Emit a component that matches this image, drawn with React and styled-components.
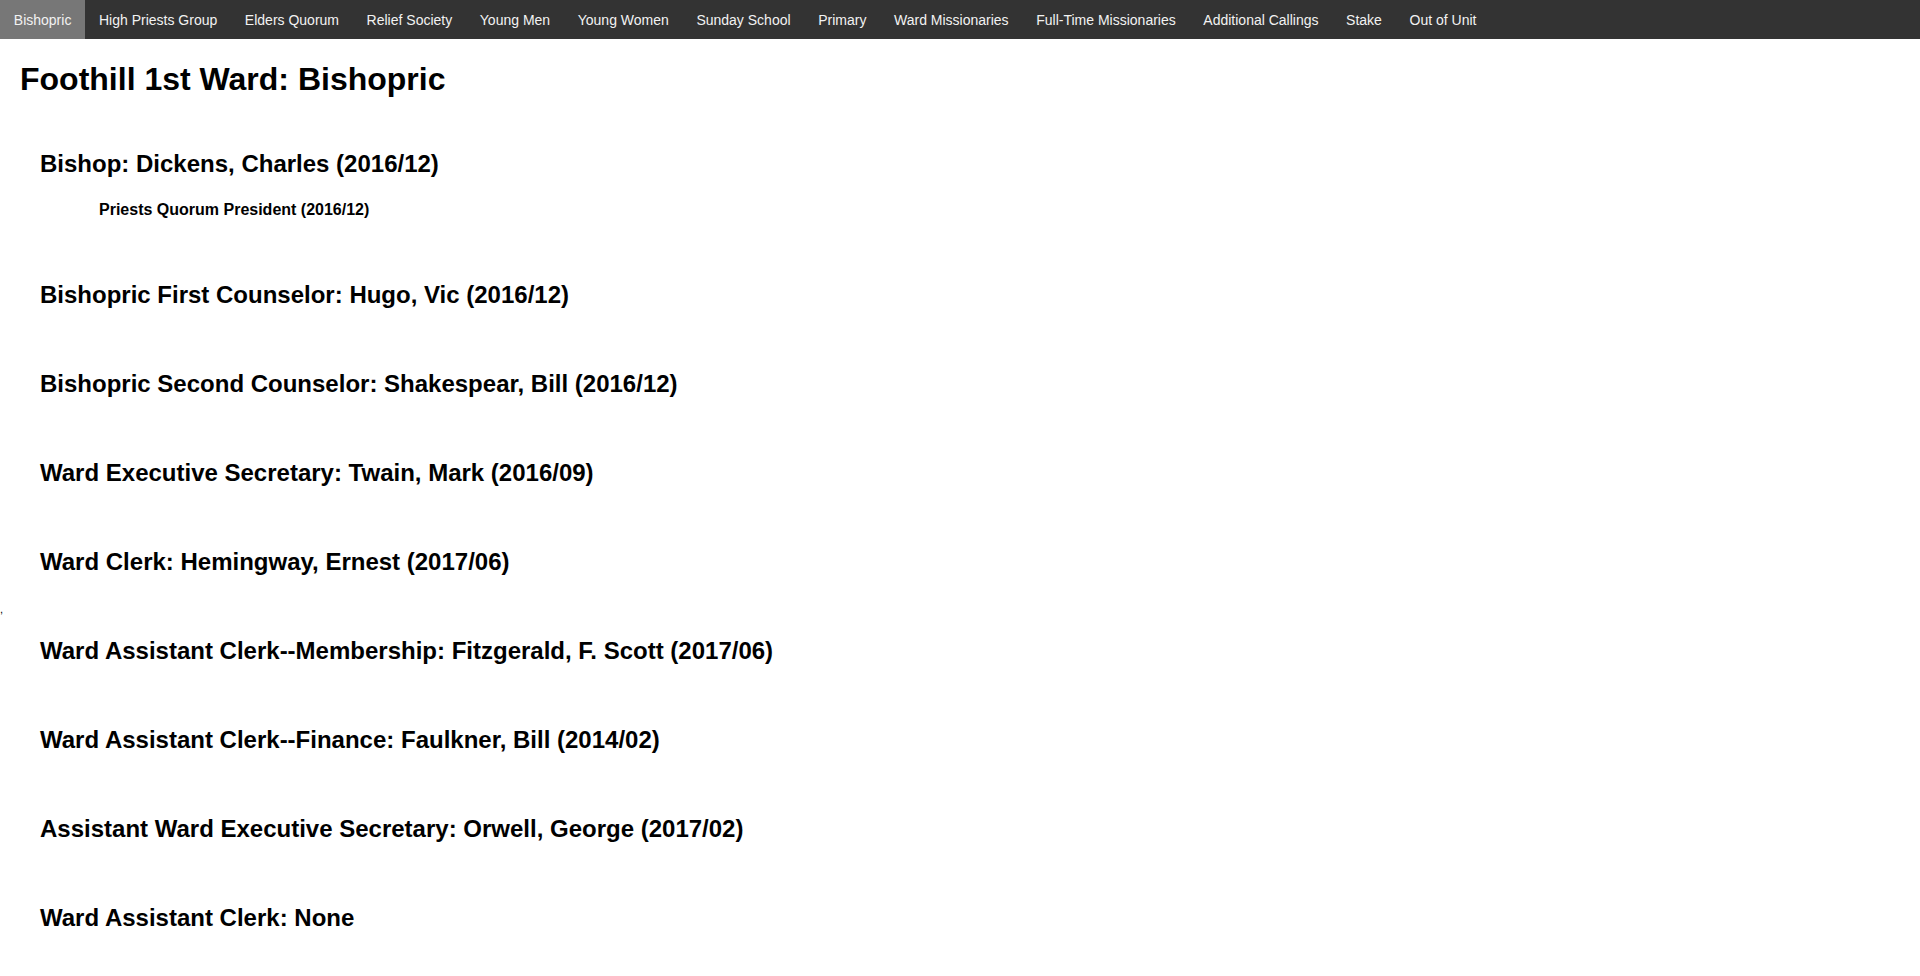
import React from "react";
import styled, { createGlobalStyle } from "styled-components";

const GlobalStyle = createGlobalStyle`
  html, body {
    margin: 0;
    padding: 0;
    background: #ffffff;
  }
  body {
    font-family: "Liberation Sans", Arial, sans-serif;
    color: #000000;
  }
`;

const Nav = styled.nav`
  display: flex;
  align-items: stretch;
  height: 39px;
  background: #333333;
`;

const NavLink = styled.a`
  display: block;
  padding: 12px 13.8px 10px;
  font-size: 14px;
  line-height: 17px;
  color: #f2f2f2;
  text-decoration: none;
  white-space: nowrap;
  background: ${(p) => (p.$active ? "#777777" : "transparent")};
  cursor: pointer;
`;

const Main = styled.main`
  padding-top: 22px;
`;

const PageTitle = styled.h1`
  margin: 0 0 0 20px;
  font-size: 32px;
  line-height: 37px;
  font-weight: bold;
`;

const RoleList = styled.div`
  margin-top: 43px;
`;

const Section = styled.section`
  padding-bottom: ${(p) => (p.$trail ? 0 : 43)}px;
  &:last-child {
    padding-bottom: 0;
  }
`;

const RoleTitle = styled.h2`
  margin: 0 0 0 40px;
  padding: 9px 0;
  font-size: 24px;
  line-height: 28px;
  font-weight: bold;
`;

const SubList = styled.ul`
  list-style: none;
  margin: 0;
  padding: 14px 0 10px 99px;
`;

const SubItem = styled.li`
  margin: 0;
  font-size: 16px;
  line-height: 18px;
  font-weight: bold;
`;

const Trail = styled.div`
  box-sizing: border-box;
  height: 43px;
  padding-top: 18px;
  font-size: 11px;
  line-height: 12px;
`;

const tabs = [
  "Bishopric",
  "High Priests Group",
  "Elders Quorum",
  "Relief Society",
  "Young Men",
  "Young Women",
  "Sunday School",
  "Primary",
  "Ward Missionaries",
  "Full-Time Missionaries",
  "Additional Callings",
  "Stake",
  "Out of Unit",
];

const roles = [
  {
    calling: "Bishop",
    who: "Dickens, Charles (2016/12)",
    subs: ["Priests Quorum President (2016/12)"],
  },
  { calling: "Bishopric First Counselor", who: "Hugo, Vic (2016/12)" },
  { calling: "Bishopric Second Counselor", who: "Shakespear, Bill (2016/12)" },
  { calling: "Ward Executive Secretary", who: "Twain, Mark (2016/09)" },
  { calling: "Ward Clerk", who: "Hemingway, Ernest (2017/06)", trail: "," },
  {
    calling: "Ward Assistant Clerk--Membership",
    who: "Fitzgerald, F. Scott (2017/06)",
  },
  { calling: "Ward Assistant Clerk--Finance", who: "Faulkner, Bill (2014/02)" },
  {
    calling: "Assistant Ward Executive Secretary",
    who: "Orwell, George (2017/02)",
  },
  { calling: "Ward Assistant Clerk", who: "None" },
];

export default function App() {
  return (
    <>
      <GlobalStyle />
      <Nav>
        {tabs.map((t, i) => (
          <NavLink key={t} $active={i === 0}>
            {t}
          </NavLink>
        ))}
      </Nav>
      <Main>
        <PageTitle>Foothill 1st Ward: Bishopric</PageTitle>
        <RoleList>
          {roles.map((r) => (
            <Section key={r.calling} $trail={!!r.trail}>
              <RoleTitle>
                {r.calling}: {r.who}
              </RoleTitle>
              {r.subs && (
                <SubList>
                  {r.subs.map((s) => (
                    <SubItem key={s}>{s}</SubItem>
                  ))}
                </SubList>
              )}
              {r.trail && <Trail>{r.trail}</Trail>}
            </Section>
          ))}
        </RoleList>
      </Main>
    </>
  );
}
